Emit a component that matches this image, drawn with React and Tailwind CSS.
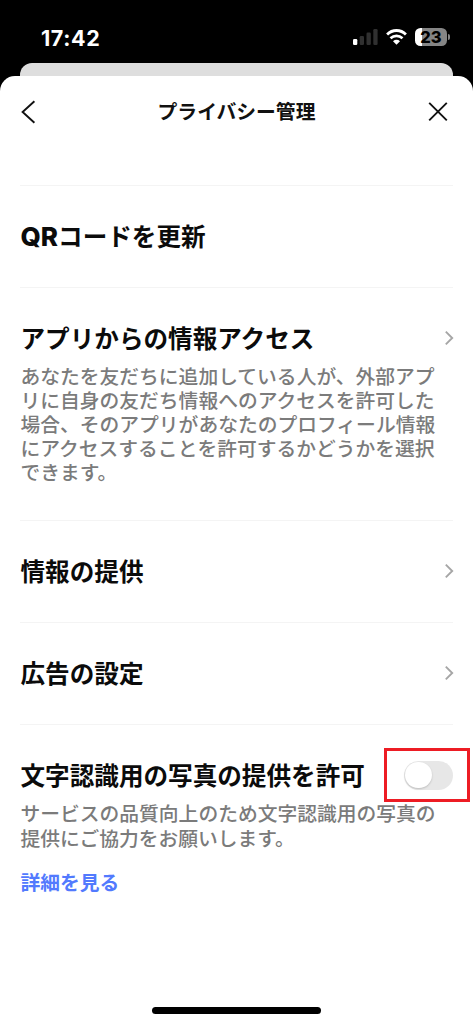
import React from 'react';

const sections = [
  { latin: 'QR', title: 'コードを更新' },
  {
    title: 'アプリからの情報アクセス',
    chevron: true,
    lines: [
      'あなたを友だちに追加している人が、外部アプ',
      'リに自身の友だち情報へのアクセスを許可した',
      '場合、そのアプリがあなたのプロフィール情報',
      'にアクセスすることを許可するかどうかを選択',
      'できます。',
    ],
  },
  { title: '情報の提供', chevron: true },
  { title: '広告の設定', chevron: true },
  {
    title: '文字認識用の写真の提供を許可',
    toggle: true,
    lines: [
      'サービスの品質向上のため文字認識用の写真の',
      '提供にご協力をお願いします。',
    ],
    link: '詳細を見る',
  },
];

function StatusBar() {
  return (
    <div className="flex h-[63px] shrink-0 items-start justify-between pl-[41px] pr-[23px] text-white">
      <span className="mt-[26px] font-[Inter,sans-serif] text-[21.5px] font-bold leading-6 tracking-[0.6px]">
        17:42
      </span>
      <div className="mt-[28px] flex items-center">
        {/* Signal */}
        <svg width="25" height="18" viewBox="0 0 25 18">
          <rect x="0" y="11" width="4.3" height="6" rx="1.2" fill="#fff" />
          <rect x="6.7" y="8" width="4.3" height="9" rx="1.2" fill="#303030" />
          <rect x="13.5" y="4.5" width="4.3" height="12.5" rx="1.2" fill="#303030" />
          <rect x="20.3" y="1" width="4.3" height="16" rx="1.2" fill="#303030" />
        </svg>
        {/* Wi-Fi */}
        <svg className="ml-[8px]" width="21" height="18" viewBox="0 0 21 18" fill="none" stroke="#fff">
          <path d="M1.1 6.4C6.4 1.2 14.6 1.2 19.9 6.4" strokeWidth="2.8" />
          <path d="M4.5 10.2C8 7 13 7 16.5 10.2" strokeWidth="2.7" />
          <path d="M7 13.2C9 11.4 12 11.4 14 13.2L10.5 16.7Z" fill="#fff" stroke="none" />
        </svg>
        {/* Battery */}
        <div className="ml-[8px] flex items-center">
          <div className="flex h-[18px] w-[32px] items-center justify-center rounded-[5.5px] bg-linear-to-r from-white from-23% to-[#858585] to-23% font-[Inter,sans-serif] text-[16.5px] font-extrabold leading-none text-black">
            23
          </div>
          <div className="ml-px h-[6px] w-[2px] rounded-r-full bg-[#858585]" />
        </div>
      </div>
    </div>
  );
}

function Chevron() {
  return (
    <svg className="-mr-px" width="10" height="16" viewBox="0 0 10 16" fill="none" stroke="#a6a6a6" strokeWidth="1.9">
      <path d="M1.8 1.6L8.2 8L1.8 14.4" />
    </svg>
  );
}

function Toggle() {
  return (
    <div className="relative flex h-[29px] w-[49px] items-center rounded-full bg-[#e7e7e7] px-px">
      <div className="h-[26px] w-[27px] rounded-full bg-white shadow-[0_1px_2px_rgba(0,0,0,0.18)]" />
      {/* Red marker around the switch */}
      <div className="absolute -left-5 -top-[13px] h-[54px] w-[86px] border-3 border-[#ed1c24]" />
    </div>
  );
}

function Section({ item }) {
  return (
    <section className="border-t border-[#f4f4f4] pb-[36px] pt-[35px]">
      <div className="flex h-[30px] items-center justify-between">
        <h2 className="-mt-[2px] whitespace-nowrap pl-[0.5px] text-[24.6px] font-bold leading-[30px] text-[#0b0b0b]">
          {item.latin && (
            <span className="font-[Inter,sans-serif] text-[26px] font-extrabold leading-none">
              {item.latin}
            </span>
          )}
          {item.title}
        </h2>
        {item.chevron && <Chevron />}
        {item.toggle && <Toggle />}
      </div>
      {item.lines && (
        <p className="mt-[11px] whitespace-nowrap pl-[0.5px] text-[19.77px] font-medium leading-[24.1px] text-[#7b7b7b]">
          {item.lines.map((line) => (
            <span key={line} className="block">
              {line}
            </span>
          ))}
        </p>
      )}
      {item.link && (
        <a className="mt-[20px] block pl-[0.5px] text-[19.75px] font-bold leading-6 text-[#527afe]">
          {item.link}
        </a>
      )}
    </section>
  );
}

export default function App() {
  return (
    <div
      lang="ja"
      className="flex h-[1024px] w-[473px] flex-col overflow-hidden bg-black font-['Noto_Sans_CJK_JP',sans-serif]"
    >
      <StatusBar />
      <div className="mx-5 h-[13px] shrink-0 rounded-t-[12px] bg-[#dedede]" />
      <div className="flex flex-1 flex-col rounded-t-[15px] bg-white">
        {/* Header */}
        <header className="flex h-[71px] items-center justify-between pl-[20px] pr-[25px]">
          <svg width="16" height="24" viewBox="0 0 16 24" fill="none" stroke="#111" strokeWidth="1.9">
            <path d="M14.4 1.2L2.6 12L14.4 22.8" />
          </svg>
          <h1 className="-mt-px ml-[9px] text-[19.8px] font-bold leading-6 text-[#111]">
            プライバシー管理
          </h1>
          <svg width="20" height="20" viewBox="0 0 20 20" fill="none" stroke="#111" strokeWidth="1.9">
            <path d="M1.2 0.8L18.8 18.4M18.8 0.8L1.2 18.4" />
          </svg>
        </header>

        <main className="mx-5 mt-[38px] flex-1">
          {sections.map((item) => (
            <Section key={item.title} item={item} />
          ))}
        </main>

        {/* Home indicator */}
        <div className="mx-auto mb-[10px] h-[7px] w-[169px] rounded-full bg-black" />
      </div>
    </div>
  );
}
